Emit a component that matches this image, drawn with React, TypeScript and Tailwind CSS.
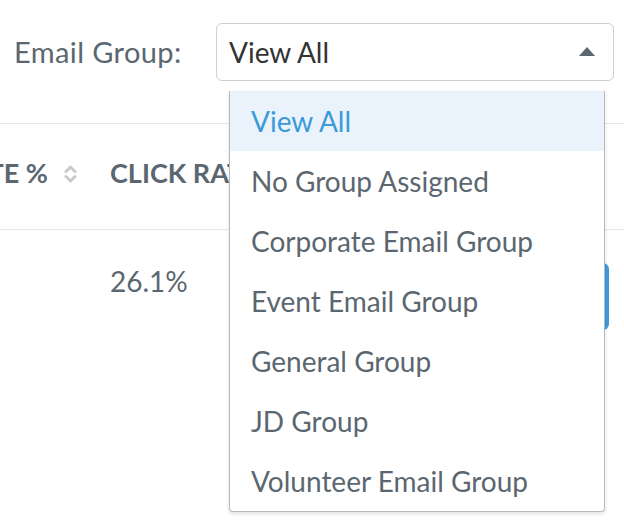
import { useState } from "react";

const groups = [
  "View All",
  "No Group Assigned",
  "Corporate Email Group",
  "Event Email Group",
  "General Group",
  "JD Group",
  "Volunteer Email Group",
];

// little up/down sort arrows used in table headers
function SortIcon() {
  return (
    <svg width="13" height="22" viewBox="0 0 13 22" fill="none" stroke="#c6cacd" strokeWidth="3" strokeLinecap="round" strokeLinejoin="round" className="shrink-0">
      <path d="M2 8.5 L6.5 4 L11 8.5" />
      <path d="M2 13.5 L6.5 18 L11 13.5" />
    </svg>
  );
}

export default function App() {
  const [selected, setSelected] = useState("View All");
  const [open, setOpen] = useState(true);

  return (
    <div className="relative w-[624px] h-[528px] overflow-hidden bg-white font-['Lato','Noto_Sans',sans-serif] text-[#5b6770]">
      {/* Filter bar */}
      <div className="flex items-center h-[123px] pb-[20px] pl-[14px]">
        <span className="text-[29px] tracking-[0.4px] w-[202px]">Email Group:</span>
        <button
          onClick={() => setOpen(!open)}
          className="flex items-center justify-between w-[398px] h-[58px] pl-[12px] pr-[18px] border border-[#ccd0d4] rounded-[6px] bg-white text-left"
        >
          <span className="text-[28px] text-[#333]">{selected}</span>
          <svg width="16" height="9" viewBox="0 0 16 9" className={open ? "" : "rotate-180"}>
            <path d="M0 9 L8 0 L16 9 Z" fill="#5b6770" />
          </svg>
        </button>
      </div>

      {/* Table */}
      <div className="border-t border-[#e8e8e8]">
        <div className="flex items-center h-[106px] pb-[6px] border-b border-[#e8e8e8] overflow-hidden">
          <div className="flex shrink-0 justify-end items-center w-[77px] gap-[16px] whitespace-nowrap">
            <span className="text-[27px] font-bold">OPEN RATE %</span>
            <SortIcon />
          </div>
          <div className="flex items-center gap-[16px] pl-[33px] whitespace-nowrap">
            <span className="text-[27px] font-bold">CLICK RATE %</span>
            <SortIcon />
          </div>
        </div>
        <div className="flex items-start h-[120px] pt-[33px] pl-[110px]">
          <span className="text-[28px] w-[360px] -mt-[3px]">26.1%</span>
          <button className="w-[140px] h-[67px] ml-[-1px] rounded-[6px] bg-[#3e9be0] text-white text-[20px]">
            View
          </button>
        </div>
      </div>

      {/* Dropdown menu */}
      {open && (
        <ul className="absolute left-[229px] top-[91px] w-[376px] bg-white border border-[#b8b8b8] border-t-0 rounded-b-[4px] shadow-[0_2px_4px_rgba(0,0,0,0.12)]">
          {groups.map((g) => (
            <li
              key={g}
              onClick={() => {
                setSelected(g);
                setOpen(false);
              }}
              className={
                g === selected
                  ? "flex items-center h-[60px] pl-[21px] text-[28px] bg-[#eaf3fb] text-[#3a9ad9] cursor-pointer"
                  : "flex items-center h-[60px] pl-[21px] text-[28px] text-[#5b6770] cursor-pointer"
              }
            >
              {g}
            </li>
          ))}
        </ul>
      )}
    </div>
  );
}
